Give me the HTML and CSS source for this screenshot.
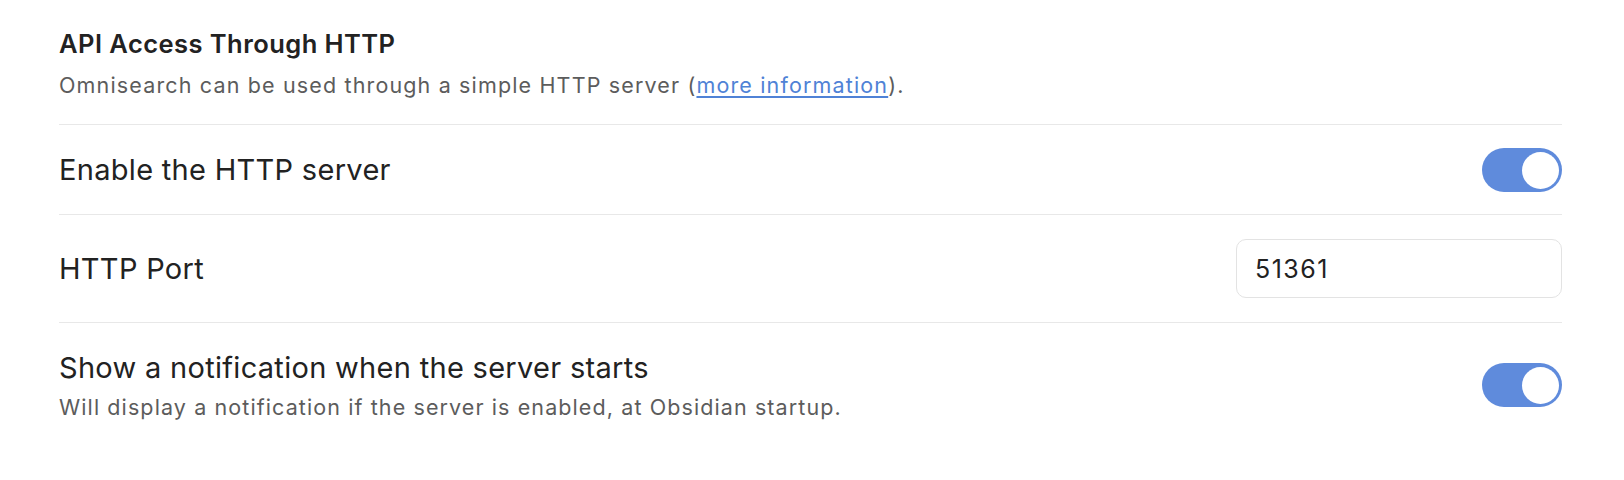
FILE: index.html
```html
<!DOCTYPE html>
<html>
<head>
<meta charset="utf-8">
<link rel="stylesheet" href="styles.css">
</head>
<body>
<div class="settings">
  <div class="setting-heading">
    <div class="heading-name">API Access Through HTTP</div>
    <div class="heading-desc">Omnisearch can be used through a simple HTTP server (<a class="link" href="#">more information</a>).</div>
  </div>
  <div class="setting-item row-toggle">
    <div class="item-info">
      <div class="item-name">Enable the HTTP server</div>
    </div>
    <div class="item-control">
      <div class="toggle on"><div class="knob"></div></div>
    </div>
  </div>
  <div class="setting-item row-input">
    <div class="item-info">
      <div class="item-name">HTTP Port</div>
    </div>
    <div class="item-control">
      <input class="text-input" type="text" value="51361">
    </div>
  </div>
  <div class="setting-item row-desc">
    <div class="item-info">
      <div class="item-name">Show a notification when the server starts</div>
      <div class="item-desc">Will display a notification if the server is enabled, at Obsidian startup.</div>
    </div>
    <div class="item-control">
      <div class="toggle on"><div class="knob"></div></div>
    </div>
  </div>
</div>
</body>
</html>
```
FILE: styles.css
```css
html, body {
  margin: 0;
  padding: 0;
  background: #ffffff;
}
body {
  font-family: Inter, "Noto Sans", sans-serif;
  color: #222222;
}
.settings {
  width: 1503px;
  margin-left: 59px;
  padding-top: 29px;
}
.setting-heading {
  padding-bottom: 25px;
}
.heading-name {
  font-size: 25.5px;
  line-height: 30px;
  font-weight: 600;
  letter-spacing: 0.45px;
  color: #222222;
}
.heading-desc {
  margin-top: 12px;
  font-size: 21.5px;
  line-height: 28px;
  letter-spacing: 1.15px;
  color: #5c5c5c;
}
.link {
  color: #4f82d6;
  text-decoration: underline;
  text-underline-offset: 3px;
}
.setting-item {
  display: flex;
  align-items: center;
  justify-content: space-between;
  border-top: 1px solid #e8e8e8;
}
.row-toggle {
  padding: 23px 0 22px;
}
.row-input {
  padding: 24px 0;
}
.row-desc {
  align-items: flex-start;
  padding: 27px 0 34px;
}
.row-desc .item-control {
  margin-top: 13px;
}
.item-name {
  font-size: 29px;
  line-height: 36px;
  letter-spacing: 0.3px;
  color: #222222;
}
.item-desc {
  font-size: 21.5px;
  line-height: 28px;
  letter-spacing: 1.1px;
  color: #5c5c5c;
  margin-top: 7px;
}
.toggle {
  width: 80px;
  height: 44px;
  border-radius: 22px;
  background: #5f8bdc;
  display: flex;
  align-items: center;
  justify-content: flex-end;
  padding: 0 3px;
  box-sizing: border-box;
}
.knob {
  width: 37px;
  height: 37px;
  border-radius: 50%;
  background: #ffffff;
}
.text-input {
  display: block;
  width: 326px;
  height: 59px;
  box-sizing: border-box;
  border: 1.5px solid #e3e3e3;
  border-radius: 10px;
  padding: 0 18px;
  font-family: Inter, "Noto Sans", sans-serif;
  font-size: 25px;
  letter-spacing: 1.5px;
  color: #222222;
  background: #ffffff;
  outline: none;
}
```
